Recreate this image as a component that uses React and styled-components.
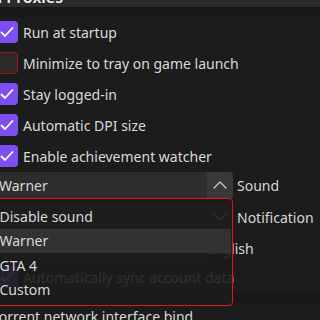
import React from "react";
import styled, { createGlobalStyle } from "styled-components";

const GlobalStyle = createGlobalStyle`
  body {
    margin: 0;
    background: #1c1c1c;
    font-family: "Noto Sans", "Open Sans", sans-serif;
    overflow: hidden;
  }
`;

const Page = styled.div`
  width: 340px;
  height: 320px;
  margin-left: -10px;
  overflow: hidden;
  color: #d9d9d9;
  font-size: 14px;
`;

const Header = styled.div`
  height: 7px;
  background: #2b2b2b;
  overflow: hidden;
  padding-left: 2px;
`;

const HeaderTitle = styled.span`
  display: block;
  margin-top: -11px;
  font-size: 16px;
  line-height: 16px;
  font-weight: 600;
  color: #f2f2f2;
  white-space: nowrap;
`;

const Band = styled.div`
  height: ${p => p.h || 9.5}px;
  background: #171717;
`;

const List = styled.div`
  display: flex;
  flex-direction: column;
`;

const Row = styled.label`
  display: flex;
  align-items: center;
  gap: 5px;
  height: ${p => p.h || 31}px;
  padding-left: 6px;
  white-space: nowrap;
`;

const Box = styled.span`
  width: 22px;
  height: 22px;
  box-sizing: border-box;
  border-radius: 4px;
  flex: none;
  display: flex;
  align-items: center;
  justify-content: center;
  background: ${p => (p.checked ? "#7d4ff2" : "#2a2a2a")};
  border: ${p => (p.checked ? "none" : "1.5px solid #a31616")};
`;

const ComboRow = styled.div`
  position: relative;
  display: flex;
  align-items: center;
  gap: 4px;
  height: 26px;
  margin-top: ${p => p.mt || 0}px;
  white-space: nowrap;
`;

const Combo = styled.div`
  display: flex;
  width: ${p => p.w || 243}px;
  height: 26px;
  flex: none;
  border-radius: 4px 4px 0 0;
  overflow: hidden;
  background: #2d2d2d;
`;

const ComboValue = styled.span`
  flex: 1;
  display: flex;
  align-items: center;
  padding-left: 9px;
`;

const ComboButton = styled.span`
  width: 26px;
  display: flex;
  align-items: center;
  justify-content: center;
  background: ${p => (p.active ? "#393939" : "transparent")};
`;

const FieldLabel = styled.span`
  color: #d6d6d6;
`;

const Popup = styled.div`
  position: absolute;
  top: 26px;
  left: 0;
  z-index: 2;
  width: 243px;
  height: 107.5px;
  box-sizing: border-box;
  padding: 5px 1px 2px 0;
  border: 1.5px solid #e3141c;
  border-radius: 4px;
  background: rgba(28, 28, 28, 0.9);
  display: flex;
  flex-direction: column;
`;

const Item = styled.div`
  height: 24.5px;
  flex: none;
  display: flex;
  align-items: center;
  padding-left: 8.5px;
  background: ${p => (p.selected ? "#323232" : "transparent")};
  color: #d8d8d8;
`;

const Footer = styled.div`
  margin-top: 4px;
  padding-left: 2px;
  line-height: 20px;
  white-space: nowrap;
`;

const Check = () => (
  <svg width="14" height="14" viewBox="0 0 14 14">
    <path d="M1.5 7.5 L5 11 L12.5 3" fill="none" stroke="#fff" strokeWidth="1.8" strokeLinecap="round" strokeLinejoin="round" />
  </svg>
);

const Chevron = ({ up }) => (
  <svg width="14" height="8" viewBox="0 0 14 8">
    <path
      d={up ? "M1 7 L7 1 L13 7" : "M1 1 L7 7 L13 1"}
      fill="none"
      stroke="#c8c8c8"
      strokeWidth="1.4"
      strokeLinecap="round"
      strokeLinejoin="round"
    />
  </svg>
);

const CheckRow = ({ checked, children, h }) => (
  <Row h={h}>
    <Box checked={checked}>{checked && <Check />}</Box>
    {children}
  </Row>
);

const options = ["Disable sound", "Warner", "GTA 4", "Custom"];

export default function App() {
  return (
    <>
      <GlobalStyle />
      <Page>
        <Header>
          <HeaderTitle>n Proxies</HeaderTitle>
        </Header>
        <Band />
        <List>
          <CheckRow checked>Run at startup</CheckRow>
          <CheckRow>Minimize to tray on game launch</CheckRow>
          <CheckRow checked>Stay logged-in</CheckRow>
          <CheckRow checked>Automatic DPI size</CheckRow>
          <CheckRow checked>Enable achievement watcher</CheckRow>
        </List>
        <ComboRow mt={0.5}>
          <Combo>
            <ComboValue>Warner</ComboValue>
            <ComboButton active>
              <Chevron up />
            </ComboButton>
          </Combo>
          <FieldLabel>Sound</FieldLabel>
          <Popup>
            {options.map(o => (
              <Item key={o} selected={o === "Warner"}>
                {o}
              </Item>
            ))}
          </Popup>
        </ComboRow>
        <ComboRow mt={6}>
          <Combo>
            <ComboValue />
            <ComboButton>
              <Chevron />
            </ComboButton>
          </Combo>
          <FieldLabel>Notification</FieldLabel>
        </ComboRow>
        <ComboRow mt={5}>
          <Combo w={212}>
            <ComboValue />
          </Combo>
          <FieldLabel>English</FieldLabel>
        </ComboRow>
        <List>
          <CheckRow checked h={32}>Automatically sync account data</CheckRow>
        </List>
        <Band />
        <Footer>Torrent network interface bind</Footer>
      </Page>
    </>
  );
}
